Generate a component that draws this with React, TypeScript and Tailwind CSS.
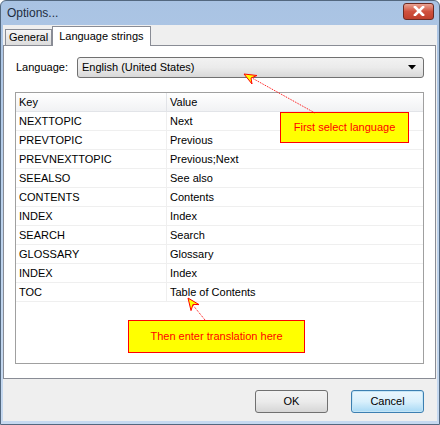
const rows: [string, string][] = [
  ["NEXTTOPIC", "Next"],
  ["PREVTOPIC", "Previous"],
  ["PREVNEXTTOPIC", "Previous;Next"],
  ["SEEALSO", "See also"],
  ["CONTENTS", "Contents"],
  ["INDEX", "Index"],
  ["SEARCH", "Search"],
  ["GLOSSARY", "Glossary"],
  ["INDEX", "Index"],
  ["TOC", "Table of Contents"],
]

const Callout = ({ text, className }: { text: string; className: string }) => (
  <div
    className={`absolute flex items-center justify-center bg-[#ffff00] border border-[#ff0000] text-[#ff0000] text-[11px] ${className}`}
  >
    {text}
  </div>
)

const App = () => {
  return (
    <div className="relative w-[440px] h-[425px] overflow-hidden font-['Liberation_Sans',Arial,sans-serif] text-[11px] text-black bg-gradient-to-b from-[#a9c3e3] via-[#bcd2ec] to-[#c6d9f0] border border-[#53687f] rounded-t-[6px]">
      {/* title bar */}
      <div className="h-[24px] flex items-center pl-[6px] pr-[5px] justify-between">
        <span className="text-[12px] text-[#1e2d3f]">Options...</span>
        <div className="w-[31px] h-[17px] mt-[-4px] rounded-[3px] border border-[#6b2a22] bg-gradient-to-b from-[#e8a293] via-[#d0513e] to-[#c0402c] flex items-center justify-center">
          <svg width="12" height="10" viewBox="0 0 12 10">
            <path d="M2 1 L10 9 M10 1 L2 9" stroke="#ffffff" strokeWidth="2.6" strokeLinecap="square" />
          </svg>
        </div>
      </div>

      {/* client area */}
      <div className="mx-[2px] h-[396px] bg-[#efefef] flex flex-col">
        {/* tabs */}
        <div className="h-[20px] flex items-end pl-[2px]">
          <div className="h-[16px] px-[3px] flex items-center bg-gradient-to-b from-[#f6f6f6] to-[#dcdcdc] border border-b-0 border-[#898c95] text-[11px]">
            General
          </div>
          <div className="h-[20px] px-[6px] flex items-center bg-white border border-b-0 border-[#898c95] -mb-[1px] relative z-10 text-[11px]">
            Language strings
          </div>
        </div>

        {/* panel */}
        <div className="h-[334px] mr-[1px] bg-white border border-[#898c95] flex flex-col px-[11px]">
          <div className="flex items-center mt-[11px] h-[21px]">
            <span className="w-[62px] pl-[1px]">Language:</span>
            <div className="flex-1 h-[21px] rounded-[3px] border border-[#707070] bg-gradient-to-b from-[#f2f2f2] via-[#ebebeb] to-[#d8d8d8] flex items-center justify-between pl-[4px] pr-[7px]">
              <span>English (United States)</span>
              <svg width="8" height="5" viewBox="0 0 8 5">
                <path d="M0 0 H8 L4 4.5 Z" fill="#000" />
              </svg>
            </div>
          </div>

          <div className="mt-[14px] h-[272px] border border-[#a0a0a0] bg-white flex flex-col">
            <div className="h-[19px] flex bg-gradient-to-b from-white to-[#f1f2f4] border-b border-[#e2e4e8]">
              <div className="w-[151px] pl-[3px] pt-[1px] flex items-center border-r border-[#e2e4e8]">Key</div>
              <div className="flex-1 pl-[3px] pt-[1px] flex items-center">Value</div>
            </div>
            {rows.map(([k, v], i) => (
              <div key={i} className="h-[19px] flex border-b border-[#efefef]">
                <div className="w-[151px] pl-[3px] pt-[1px] flex items-center border-r border-[#efefef]">{k}</div>
                <div className="flex-1 pl-[3px] pt-[1px] flex items-center">{v}</div>
              </div>
            ))}
          </div>
        </div>

        {/* buttons */}
        <div className="flex justify-end gap-[23px] pr-[13px] mt-[11px]">
          <button className="w-[73px] h-[23px] rounded-[3px] border border-[#707070] bg-gradient-to-b from-[#f2f2f2] via-[#ebebeb] to-[#d6d6d6] text-[11px]">
            OK
          </button>
          <button className="w-[73px] h-[23px] rounded-[3px] border border-[#3c7fb1] bg-gradient-to-b from-[#eaf6fd] via-[#d9f0fc] to-[#a7d9f5] text-[11px] shadow-[inset_0_0_0_1px_#c4e5f6]">
            Cancel
          </button>
        </div>
      </div>

      {/* callouts */}
      <Callout text="First select language" className="left-[279px] top-[111px] w-[129px] h-[31px]" />
      <Callout text="Then enter translation here" className="left-[127px] top-[319px] w-[177px] h-[33px]" />

      <svg className="absolute left-0 top-0 pointer-events-none" width="440" height="425" viewBox="-1 -1 440 425">
        <path d="M313 111 L250 76" stroke="#ff0000" strokeWidth="1" strokeDasharray="1 1" fill="none" />
        <polygon points="242,72 255,73.5 249,76 250,82" fill="#ffff00" stroke="#ff0000" strokeWidth="1" />
        <path d="M203 318 L190 302" stroke="#ff0000" strokeWidth="1" strokeDasharray="1 1" fill="none" />
        <polygon points="186,296 197,302.6 191,302.4 189,308.6" fill="#ffff00" stroke="#ff0000" strokeWidth="1" />
      </svg>
    </div>
  )
}

export default App
